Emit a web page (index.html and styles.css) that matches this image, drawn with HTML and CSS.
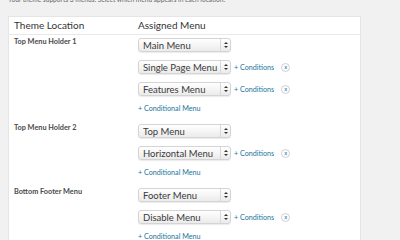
FILE: index.html
```html
<!DOCTYPE html>
<html lang="en">

<head>
    <meta charset="UTF-8">
    <title>Menu Locations</title>
    <link rel="stylesheet" href="styles.css">
</head>

<body>

    <div class="wrap">
        <p class="intro">Your theme supports 3 menus. Select which menu appears in each location.</p>

        <!-- Locations table -->
        <table class="locations">
            <thead>
                <tr>
                    <th class="col-location">Theme Location</th>
                    <th>Assigned Menu</th>
                </tr>
            </thead>
            <tbody>
                <tr>
                    <td class="location-name">Top Menu Holder 1</td>
                    <td>
                        <div class="menu-line">
                            <div class="select"><span>Main Menu</span><i class="arrows"></i></div>
                        </div>
                        <div class="menu-line">
                            <div class="select"><span>Single Page Menu</span><i class="arrows"></i></div>
                            <a class="link" href="#">+ Conditions</a>
                            <span class="remove">x</span>
                        </div>
                        <div class="menu-line">
                            <div class="select"><span>Features Menu</span><i class="arrows"></i></div>
                            <a class="link" href="#">+ Conditions</a>
                            <span class="remove">x</span>
                        </div>
                        <a class="link add-menu" href="#">+ Conditional Menu</a>
                    </td>
                </tr>
                <tr>
                    <td class="location-name">Top Menu Holder 2</td>
                    <td>
                        <div class="menu-line">
                            <div class="select"><span>Top Menu</span><i class="arrows"></i></div>
                        </div>
                        <div class="menu-line">
                            <div class="select"><span>Horizontal Menu</span><i class="arrows"></i></div>
                            <a class="link" href="#">+ Conditions</a>
                            <span class="remove">x</span>
                        </div>
                        <a class="link add-menu" href="#">+ Conditional Menu</a>
                    </td>
                </tr>
                <tr>
                    <td class="location-name">Bottom Footer Menu</td>
                    <td>
                        <div class="menu-line">
                            <div class="select"><span>Footer Menu</span><i class="arrows"></i></div>
                        </div>
                        <div class="menu-line">
                            <div class="select"><span>Disable Menu</span><i class="arrows"></i></div>
                            <a class="link" href="#">+ Conditions</a>
                            <span class="remove">x</span>
                        </div>
                        <a class="link add-menu" href="#">+ Conditional Menu</a>
                    </td>
                </tr>
            </tbody>
        </table>
    </div>

</body>

</html>
```

FILE: styles.css
```css
body {
    font-family: 'Lato', sans-serif;
    font-size: 9px;
    margin: 0;
    padding: 0;
    background-color: #f1f1f1;
    color: #444;
    overflow: hidden;
}

.wrap {
    margin-top: -6px;
    padding: 0 8px;
}

.intro {
    margin: 0 0 12px;
    font-size: 6.6px;
    line-height: 10px;
    color: #666;
}

.locations {
    width: 353px;
    border-collapse: collapse;
    background-color: white;
    border: 1px solid #e5e5e5;
}

.locations th {
    text-align: left;
    font-weight: normal;
    font-size: 10px;
    color: #333;
    padding: 6px 5px 6px;
    line-height: 5px;
    border-bottom: 1px solid #e9e9e9;
}

.col-location {
    width: 114px;
}

.locations td {
    vertical-align: top;
    padding: 3px 5px 7px;
}

.location-name {
    font-size: 7.3px;
    font-weight: 700;
    color: #4a4a4a;
    line-height: 10px;
}

.locations td.location-name {
    padding-top: 2px;
}

.menu-line {
    display: flex;
    align-items: center;
    height: 14px;
    margin-bottom: 8px;
}

/* Fake select box */
.select {
    box-sizing: border-box;
    width: 93px;
    height: 14px;
    border: 1px solid #d4d4d4;
    border-radius: 3px;
    background: linear-gradient(#ffffff, #ebebeb);
    box-shadow: 0 1px 1px rgba(0, 0, 0, 0.08);
    display: flex;
    align-items: center;
    padding-left: 4px;
    font-size: 9.5px;
    color: #3a3a3a;
}

.select span {
    flex: 1;
    white-space: nowrap;
}

.arrows {
    width: 9px;
    height: 12px;
    border-left: 1px solid #d9d9d9;
    position: relative;
}

.arrows::before,
.arrows::after {
    content: "";
    position: absolute;
    left: 3px;
    border-left: 2px solid transparent;
    border-right: 2px solid transparent;
}

.arrows::before {
    top: 3px;
    border-bottom: 2px solid #333;
}

.arrows::after {
    top: 7px;
    border-top: 2px solid #333;
}

.link {
    font-size: 7.2px;
    color: #21759b;
    text-decoration: none;
}

.menu-line .link {
    margin-left: 3px;
}

.remove {
    box-sizing: border-box;
    width: 9px;
    height: 9px;
    margin-left: 7px;
    border: 1px solid #cfcfcf;
    border-radius: 50%;
    font-size: 6px;
    line-height: 6px;
    text-align: center;
    color: #21759b;
}

.add-menu {
    display: block;
    line-height: 10px;
}
```
